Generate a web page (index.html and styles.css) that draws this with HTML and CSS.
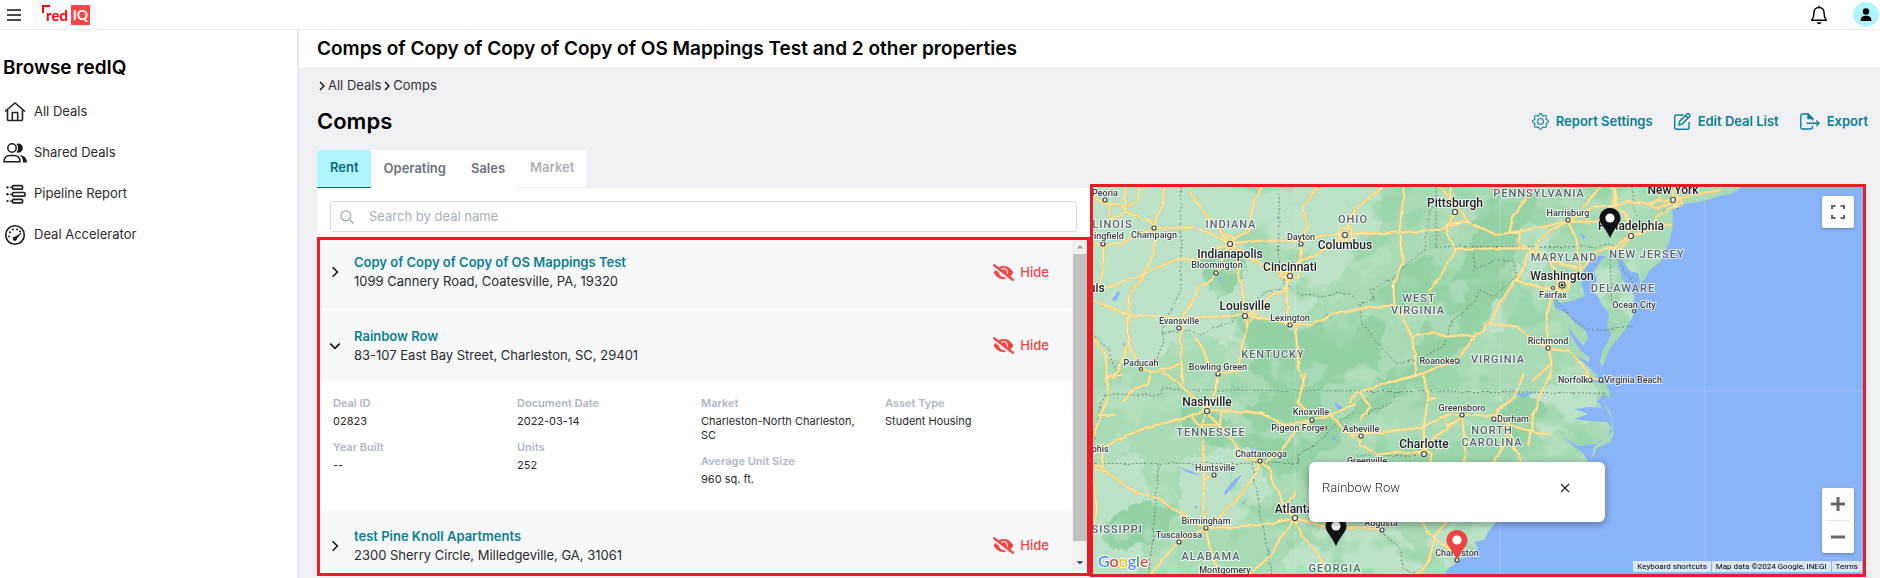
FILE: index.html
```html
<!DOCTYPE html>
<html lang="en">
<head>
<meta charset="utf-8">
<meta name="viewport" content="width=device-width, initial-scale=1">
<title>redIQ - Comps</title>
<link rel="stylesheet" href="styles.css">
</head>
<body>
<svg class="defs" width="0" height="0" aria-hidden="true">
  <symbol id="eye-off" viewBox="0 0 640 512"><path fill="currentColor" stroke="currentColor" stroke-width="14" d="M320 400c-75.85 0-137.25-58.71-142.9-133.11L72.2 185.82c-13.79 17.3-26.48 35.59-36.72 55.59a32.35 32.35 0 0 0 0 29.19C89.71 376.41 197.07 448 320 448c26.91 0 52.87-4 77.89-10.46L346 397.39a144.13 144.13 0 0 1-26 2.61zm313.82 58.1l-110.55-85.44a331.25 331.25 0 0 0 81.25-102.07 32.35 32.35 0 0 0 0-29.19C550.29 135.59 442.93 64 320 64a308.15 308.15 0 0 0-147.32 37.7L45.46 3.37A16 16 0 0 0 23 6.18L3.37 31.45A16 16 0 0 0 6.18 53.9l588.36 454.73a16 16 0 0 0 22.46-2.81l19.64-25.27a16 16 0 0 0-2.82-22.45zm-183.72-142l-39.3-30.38A94.75 94.75 0 0 0 416 256a94.76 94.76 0 0 0-121.31-92.21A47.65 47.65 0 0 1 304 192a46.64 46.64 0 0 1-1.54 10l-73.61-56.89A142.31 142.31 0 0 1 320 112a143.92 143.92 0 0 1 144 144c0 21.63-5.29 41.79-13.9 60.11z"/></symbol>
  <symbol id="chev" viewBox="0 0 10 10"><path d="M3 1l4 4-4 4" fill="none" stroke="currentColor" stroke-width="1.300"/></symbol>
  <symbol id="pin" viewBox="0 0 22 32"><path d="M11 1C5.2 1 .5 5.600.5 11.300c0 5.700 5.500 8.700 10.500 19.700 5-11 10.500-14 10.500-19.700C21.500 5.600 16.800 1 11 1z" fill="currentColor"/><circle cx="11" cy="11" r="4.600" fill="#fff"/></symbol>
</svg>

<header class="topbar">
  <button class="icon-btn" type="button" aria-label="Menu"><svg width="14" height="14" viewBox="0 0 14 14"><path d="M0 2h14M0 7h14M0 12h14" stroke="#111" stroke-width="1.300"/></svg></button>
  <a class="logo" href="#" aria-label="redIQ home">
    <svg class="logo-mark" width="8" height="8" viewBox="0 0 8 8"><path d="M1 8V1h7" fill="none" stroke="#f00" stroke-width="2"/></svg>
    <span class="logo-red">red</span><span class="logo-iq">IQ</span>
  </a>
  <div class="topbar-right">
    <button class="icon-btn" type="button" aria-label="Notifications"><svg width="18" height="20" viewBox="0 0 18 20"><path d="M9 2.500c-3.300 0-5 2.400-5 5 0 4-.8 6-2.300 7.800h14.600C14.800 13.500 14 11.500 14 7.500c0-2.600-1.700-5-5-5zM9 .7v2" fill="none" stroke="#000" stroke-width="1.500" stroke-linejoin="round"/><path d="M6.800 17.200h4.400a2.200 2 0 0 1-4.400 0z"/></svg></button>
    <button class="avatar" type="button" aria-label="Account"><svg width="12" height="14" viewBox="0 0 12 14"><circle cx="6" cy="3.500" r="3.200"/><path d="M.5 13c0-3.500 2-5.200 5.500-5.200s5.500 1.700 5.500 5.200z"/></svg></button>
  </div>
</header>

<div class="layout">
  <nav class="sidebar" aria-label="Browse">
    <h2>Browse redIQ</h2>
    <a href="#"><svg viewBox="0 0 24 24"><path d="M2 11.500L12 3l10 8.500M4.500 10v9.500a1 1 0 0 0 1 1h13a1 1 0 0 0 1-1V10M9.300 20v-7.500h5.400V20" fill="none" stroke="#222" stroke-width="1.600"/></svg>All Deals</a>
    <a href="#"><svg viewBox="0 0 24 24"><path d="M13.500 3a4.500 4.500 0 1 1 0 8.200 6 6 0 0 0 0-8.200zM16.500 14c4.500.5 7 2.500 7.500 7.500h-4c0-3.500-1-6-3.500-7.500z" fill="#1b1b1f"/><circle cx="9" cy="7" r="4.200" fill="#fff" stroke="#1b1b1f" stroke-width="1.500"/><path d="M1 20.800c0-4 2-6.300 6-6.300h4c4 0 6 2.300 6 6.300z" fill="none" stroke="#1b1b1f" stroke-width="1.500"/></svg>Shared Deals</a>
    <a href="#"><svg viewBox="0 0 24 24"><g fill="none" stroke="#222" stroke-width="1.700"><rect x="9.500" y="3.600" width="10" height="3.600" rx="1"/><rect x="9.500" y="10.500" width="12.500" height="3.600" rx="1"/><rect x="9.500" y="17.300" width="10" height="3.600" rx="1"/></g><g fill="#222"><circle cx="4.500" cy="5.400" r="1.200"/><circle cx="4.500" cy="12.300" r="1.200"/><circle cx="4.500" cy="19.100" r="1.200"/><path d="M7 4.800h3v1.200H7zM7 11.700h3v1.200H7zM7 18.500h3v1.200H7z"/></g></svg>Pipeline Report</a>
    <a href="#"><svg viewBox="0 0 24 24"><circle cx="12" cy="12" r="9.300" fill="none" stroke="#1b1b1f" stroke-width="1.600"/><path d="M10.500 15.200l7.500-5-5.500 6.800z" fill="#1b1b1f" stroke="#1b1b1f" stroke-width=".8"/><circle cx="11.800" cy="15.800" r="2.100" fill="#1b1b1f"/><g fill="#1b1b1f"><circle cx="6" cy="13.500" r="1"/><circle cx="7" cy="9.200" r="1"/><circle cx="10" cy="6.500" r="1"/><circle cx="14" cy="6.500" r="1"/><circle cx="17" cy="8.500" r="1"/></g></svg>Deal Accelerator</a>
  </nav>

  <main class="main">
    <h1 class="page-title">Comps of Copy of Copy of Copy of OS Mappings Test and 2 other properties</h1>
    <div class="content">
      <nav class="crumbs" aria-label="Breadcrumb"><svg width="10" height="12"><use href="#chev"/></svg><a href="#">All Deals</a><svg width="10" height="12"><use href="#chev"/></svg><a href="#">Comps</a></nav>
      <div class="heading">
        <h2>Comps</h2>
        <div class="actions">
          <button type="button"><svg width="17" height="17" viewBox="0 0 16 16" fill="currentColor"><path d="M8 4.754a3.246 3.246 0 1 0 0 6.492 3.246 3.246 0 0 0 0-6.492M5.754 8a2.246 2.246 0 1 1 4.492 0 2.246 2.246 0 0 1-4.492 0"/><path d="M9.796 1.343c-.527-1.790-3.065-1.790-3.592 0l-.094.319a.873.873 0 0 1-1.255.52l-.292-.16c-1.640-.892-3.433.902-2.540 2.541l.159.292a.873.873 0 0 1-.52 1.255l-.319.094c-1.790.527-1.790 3.065 0 3.592l.319.094a.873.873 0 0 1 .52 1.255l-.16.292c-.892 1.640.901 3.434 2.541 2.540l.292-.159a.873.873 0 0 1 1.255.52l.094.319c.527 1.790 3.065 1.790 3.592 0l.094-.319a.873.873 0 0 1 1.255-.52l.292.16c1.640.893 3.434-.902 2.540-2.541l-.159-.292a.873.873 0 0 1 .52-1.255l.319-.094c1.790-.527 1.790-3.065 0-3.592l-.319-.094a.873.873 0 0 1-.52-1.255l.16-.292c.893-1.640-.902-3.433-2.541-2.540l-.292.159a.873.873 0 0 1-1.255-.52zm-2.633.283c.246-.835 1.428-.835 1.674 0l.094.319a1.873 1.873 0 0 0 2.693 1.115l.291-.16c.764-.415 1.600.42 1.184 1.185l-.159.292a1.873 1.873 0 0 0 1.116 2.692l.318.094c.835.246.835 1.428 0 1.674l-.319.094a1.873 1.873 0 0 0-1.115 2.693l.16.291c.415.764-.42 1.600-1.185 1.184l-.291-.159a1.873 1.873 0 0 0-2.693 1.116l-.094.318c-.246.835-1.428.835-1.674 0l-.094-.319a1.873 1.873 0 0 0-2.692-1.115l-.292.16c-.764.415-1.600-.42-1.184-1.185l.159-.291A1.873 1.873 0 0 0 1.945 8.930l-.319-.094c-.835-.246-.835-1.428 0-1.674l.319-.094A1.873 1.873 0 0 0 3.060 4.377l-.16-.292c-.415-.764.42-1.600 1.185-1.184l.292.159a1.873 1.873 0 0 0 2.692-1.115z"/></svg>Report Settings</button>
          <button type="button"><svg width="17" height="17" viewBox="0 0 17 17" fill="none" stroke="currentColor" stroke-width="1.400"><path d="M9.500 2H2.700a2 2 0 0 0-2 2v10.300a2 2 0 0 0 2 2H13a2 2 0 0 0 2-2V9M5 12l.8-3.800 7-7a1.600 1.600 0 0 1 2.600 2.600l-7 7zM11.500 2.600l2.600 2.600"/></svg>Edit Deal List</button>
          <button type="button"><svg width="20" height="17" viewBox="0 0 20 17" fill="none" stroke="currentColor" stroke-width="1.400"><path d="M12.500 7.500V5.500L8 1H2.500a1.700 1.700 0 0 0-1.700 1.700v11.600A1.700 1.700 0 0 0 2.500 16h8.300a1.700 1.700 0 0 0 1.700-1.700v-1.500M6.500 10.200H19M16.300 7.500l2.700 2.700-2.700 2.700"/><path d="M8 1v4.500h4.500z" fill="currentColor"/></svg>Export</button>
        </div>
      </div>
      <div class="tabs" role="tablist">
        <button class="active" type="button" role="tab" aria-selected="true">Rent</button><button type="button" role="tab">Operating</button><button type="button" role="tab">Sales</button><button class="disabled" type="button" role="tab" disabled>Market</button>
      </div>
      <div class="split">
        <section class="panel">
          <label class="search">
            <svg width="14" height="14" viewBox="0 0 14 14"><circle cx="5.800" cy="5.800" r="4.900" fill="none" stroke="#9aa9b8" stroke-width="1.200"/><path d="M9.300 9.300l4.200 4.200" stroke="#9aa9b8" stroke-width="1.200"/></svg>
            <input type="text" placeholder="Search by deal name" aria-label="Search by deal name">
          </label>
          <div class="list">
            <div class="items">
              <article class="deal">
                <button class="toggle" type="button" aria-label="Expand"><svg width="12" height="12"><use href="#chev"/></svg></button>
                <div class="info"><a href="#">Copy of Copy of Copy of OS Mappings Test</a><p>1099 Cannery Road, Coatesville, PA, 19320</p></div>
                <button class="hide" type="button"><svg width="21" height="17"><use href="#eye-off"/></svg>Hide</button>
              </article>
              <article class="deal">
                <button class="toggle open" type="button" aria-label="Collapse"><svg width="12" height="12"><use href="#chev"/></svg></button>
                <div class="info"><a href="#">Rainbow Row</a><p>83-107 East Bay Street, Charleston, SC, 29401</p></div>
                <button class="hide" type="button"><svg width="21" height="17"><use href="#eye-off"/></svg>Hide</button>
              </article>
              <div class="details">
                <dl><dt>Deal ID</dt><dd>02823</dd><dt>Year Built</dt><dd>--</dd></dl>
                <dl><dt>Document Date</dt><dd>2022-03-14</dd><dt>Units</dt><dd>252</dd></dl>
                <dl><dt>Market</dt><dd>Charleston-North Charleston, SC</dd><dt>Average Unit Size</dt><dd>960 sq. ft.</dd></dl>
                <dl><dt>Asset Type</dt><dd>Student Housing</dd></dl>
              </div>
              <article class="deal">
                <button class="toggle" type="button" aria-label="Expand"><svg width="12" height="12"><use href="#chev"/></svg></button>
                <div class="info"><a href="#">test Pine Knoll Apartments</a><p>2300 Sherry Circle, Milledgeville, GA, 31061</p></div>
                <button class="hide" type="button"><svg width="21" height="17"><use href="#eye-off"/></svg>Hide</button>
              </article>
            </div>
            <div class="scroll" aria-hidden="true">
              <svg width="14" height="14" viewBox="0 0 14 14"><path d="M3.500 8.500L7 5l3.500 3.500z" fill="#a3a3a3"/></svg>
              <div class="thumb"></div>
              <svg width="14" height="14" viewBox="0 0 14 14"><path d="M3.500 5L7 8.500 10.500 5z" fill="#505050"/></svg>
            </div>
          </div>
        </section>

        <section class="map" aria-label="Map">
          <svg class="map-art" viewBox="1093 187 770 387" preserveAspectRatio="xMinYMin slice">
            <defs>
              <filter id="rough" x="0" y="0" width="100%" height="100%"><feTurbulence type="fractalNoise" baseFrequency=".06" numOctaves="3" seed="4"/><feDisplacementMap in="SourceGraphic" scale="18" xChannelSelector="R" yChannelSelector="G"/></filter>
              <filter id="wiggle" x="-5%" y="-5%" width="110%" height="110%" color-interpolation-filters="sRGB"><feTurbulence type="fractalNoise" baseFrequency=".09" numOctaves="2" seed="8"/><feDisplacementMap in="SourceGraphic" scale="4" xChannelSelector="R" yChannelSelector="G"/></filter>
              <filter id="patches" x="0" y="0" width="100%" height="100%" color-interpolation-filters="sRGB"><feTurbulence type="fractalNoise" baseFrequency=".028 .036" numOctaves="3" seed="11"/><feColorMatrix values="0 0 0 0 .733 0 0 0 0 .886 0 0 0 0 .776 9 0 0 0 -4.900"/></filter>
              <filter id="forest" x="0" y="0" width="100%" height="100%" color-interpolation-filters="sRGB"><feTurbulence type="fractalNoise" baseFrequency=".022 .03" numOctaves="3" seed="23"/><feColorMatrix values="0 0 0 0 .58 0 0 0 0 .824 0 0 0 0 .647 9 0 0 0 -4.900"/></filter>
              <g id="roads" fill="none" stroke-linejoin="round" stroke-linecap="round">
                <path transform="translate(1085 180) scale(.3333)" d="M20 50L60 70 110 75 125 95 200 125 208 145M120 15L122 95 75 120M72 75L75 130M165 15L160 60 130 80M240 15L235 70 215 110 208 145 205 220 170 300 130 345 132 410 130 490 120 520 85 595M208 145L330 142 365 155 435 190M312 15L330 60 375 115 435 190M534 15L505 70 500 110 495 150 435 185M435 190L520 183 580 182 650 183 720 165 780 162M20 195L110 192 140 170 208 145M55 195L55 270 40 320M65 325L170 285 270 240 340 238 400 205 435 190M435 190L400 270 380 300 340 320 330 350 300 400 292 440 285 470 292 600M435 190L458 240 460 290 475 340 480 405 488 450 470 500 465 570 400 582M435 190L500 240 540 258 615 285M615 285L645 240 650 190 665 130 655 80 700 20M615 285L640 245 710 215 780 165M615 285L600 330 545 355 540 380 480 405M605 290L608 420 630 440 635 480 640 560 655 600M480 405L560 420 615 430 680 435 750 400 810 392M20 360L70 380 130 405 240 408 290 415 420 408 480 405M335 475L355 510 370 550 400 582M130 490L170 568 200 580 290 550M20 470L60 520 70 595M230 570L265 600M780 163L810 90M765 145h35v35h-35zM425 170h20v30h-15M580 285l60 10 5-50M490 398l25 5-20 20"/>
                <path transform="translate(1350 180) scale(.3333)" d="M100 15L50 60 0 105M165 15L155 90 148 160 158 245 130 310 133 375 160 410 185 470 195 520 195 590M-15 162L145 158 280 148 300 130 350 125 440 165 530 150 650 125 740 125 790 122M265 15L300 50 330 95 355 125 290 140 300 180 318 210 270 290 240 330 240 370M318 210L430 205 540 205M545 15L530 50 490 110 478 155 510 160 505 190 540 210 520 265 500 300 460 350 420 430 375 470 320 540 190 590 150 600M190 470L250 458 290 470 350 465 375 470M0 390L133 375M420 430L500 440 550 480 595 505 590 400 610 350 638 315 695 265 740 215 800 200M655 125L600 150 565 190 560 210 600 240 638 315M655 125L680 180 685 240 695 265M655 125L720 85 810 75M700 80L755 15M498 300L540 315 600 330 638 315M595 505L660 515 700 560 720 600M595 505L605 550 550 600M605 550L600 600M540 210L620 250 690 265M790 15L800 75M315 95l-20 40M300 15l5 60M620 300h35v30h-35z"/>
                <path transform="translate(1610 180) scale(.3333)" d="M0 80L55 65 120 70 185 60 250 45 330 30M140 20L150 60 120 70M185 60L200 75 140 110 125 150 60 165 0 210M5 15L15 80 45 100 60 165 30 210M125 130L180 135M120 70L140 85 205 60M205 45l10 25-30 15M190 25v60"/>
                <path transform="translate(1085 375) scale(.3333)" d="M110 0L65 5 70 60 45 130 25 180M40 120L90 120M195 5L190 25 150 40 120 70 115 80M250 0L320 60 365 105M400 0L395 40 365 105M288 0L292 25M365 105L300 130 190 155 130 180 60 215 20 240M365 105L480 110 530 115 600 150 680 135 740 120 810 85M365 105L400 150 450 205 480 250 530 258M315 125L340 150 405 150 410 110M365 105L355 150 357 270 355 350 362 460M355 315L388 300M680 135L630 170 590 225 545 260M530 258L555 290 575 345 600 400 630 430M525 260L500 320 440 390 362 460M20 280L60 290 150 350 220 370 280 410 362 460M25 270L55 275 50 210M22 285L35 400 30 470M362 460L530 450 630 430M362 460L280 500 195 600M362 460L375 520 405 600M600 400L630 350M630 430L580 500 560 540 490 600M630 430L650 480 700 540 720 600M630 430L700 450 810 460M660 0L640 80 670 120M740 120L780 170 810 190"/>
                <path transform="translate(1350 375) scale(.3333)" d="M0 80L20 55 90 30 200 0M220 0L235 60 222 150 222 235M235 70L255 70M0 180L120 170 220 155 290 120 335 120 430 120 480 150 530 165 600 180M30 185L30 210 80 240 150 230 222 235 250 190 330 130M335 120L345 200 345 260M290 120L290 150 310 145M520 0L490 70 450 100 430 130M600 0L570 60 550 120 535 210M30 55L60 95 35 130M470 150L470 200 430 260M480 170L490 210 515 260M700 0L720 10 760 15M0 455L45 458 95 465M215 440L240 480 310 530M290 440L255 480 240 550 205 600M200 240l20-15 25 10-5 30"/>
              </g>
            </defs>
            <rect x="1090" y="180" width="900" height="420" fill="#a8dab5"/>
            <g filter="url(#rough)">
              <path fill="#bbe2c6" d="M1080 175h300l-12 60-30 40-40 50-60 20-50-12-40 32-68-10zM1085 470l50-20 20 60-20 70-60 10zM1180 460l70-20 20 50-40 40-50-10zM1575 270l60-10 10 60-25 30-18-20zM1430 540l60-50 30-10-10 50-60 50zM1280 560l60-40 60 10 30 50-100 20zM1530 390l60-10 5 40-50 20z"/>
              <path fill="#94d2a5" d="M1345 345l60-80 55-20 40-60 40 5-30 70-50 60-50 70-80 60-50 30-30-20 30-60zM1100 520l50-20 30 10-20 30-50 10zM1175 400l60 20 40-30 40 10-30 40-60 10-40-20zM1240 310l60 20 30-20 20 60-60 30-40-30zM1200 260l30-10 20 20-30 30zM1440 310l60-40 10 20-50 60-40 30zM1500 410l30-20 15 30-30 30z"/>
              <path fill="#a8dab5" d="M1380 340l30-40 20 10-20 50-30 20zM1440 230l30-20 10 20-30 50-20 5zM1320 390l40-20 20 5-30 40-30 5z"/>
              <path fill="#bbe2c6" d="M1484 325l40-70 25-40 15-5-20 50-25 40-22 35zM1360 205l20-10 5 25-15 15z"/>
            </g>
            <rect x="1093" y="187" width="770" height="390" filter="url(#patches)" opacity=".55"/>
            <rect x="1230" y="187" width="400" height="390" filter="url(#forest)" opacity=".6"/>
            <g fill="#8ab4f8">
              <path d="M1745 180L1738 190 1730 194 1720 196 1700 202 1684 204 1680 207 1672 208 1673 216 1672 230 1669 243 1660 262 1650 270 1645 279 1640 283 1638 273 1630 271 1624 263 1619 255 1618 264 1622 278 1628 290 1635 296 1633 303 1635 312 1627 327 1617 340 1610 348 1606 358 1602 367 1600 362 1602 352 1608 342 1611 334 1607 325 1609 314 1602 305 1599 298 1592 290 1597 280 1594 272 1600 262 1606 256 1597 256 1589 262 1583 272 1581 284 1585 296 1575 300 1560 303 1553 298 1555 308 1567 313 1575 323 1585 330 1588 338 1583 346 1576 337 1568 327 1570 334 1580 350 1590 358 1588 362 1575 355 1590 368 1598 376 1585 380 1598 383 1607 384 1611 400 1604 394 1597 401 1602 408 1590 407 1574 409 1588 414 1574 419 1590 421 1607 422 1611 428 1608 436 1596 444 1578 446 1562 436 1576 448 1583 453 1588 462 1560 478 1520 494 1500 516 1497 522 1490 529 1484 540 1474 542 1478 548 1467 556 1457 562 1448 569 1440 582 1990 590 1990 180z"/>
              <path d="M1112 300l6-9 2 2-4 8zM1123 342l3 3-1 9zM1224 492l12-14 6-3-8 11-9 9zM1176 466l12 4 15 6-14-3zM1218 278l4-2-2 6zM1195 505l3 4-4-2zM1242 503l6-5-4 6zM1267 548l4 5-2 2zM1510 388l12 6 12-2-10 6-10-4zM1334 402l10 6-6 2zM1332 435l5 4-4 1zM1250 448l8 2-6 2zM1580 232l6 5-3 3z"/>
            </g>
            <path d="M1603 400l8 14 3 20-4 8-13 6-6 12 3-14 12-8 6-6-1-14z" fill="#a8dab5"/>
            <path d="M1705 187v390M1093 391h770M1500 187v390M1295 187v390" stroke="#fff" stroke-opacity=".18" fill="none"/>
            <g fill="none" stroke="#66806f" stroke-width="2.700" stroke-dasharray="6 6" filter="url(#wiggle)">
              <path transform="translate(1085 180) scale(.3333)" d="M287 20L288 330 240 420 235 460 290 455 310 450 350 465 380 445 440 430 450 410 480 400 515 360 540 335 580 330 600 300 580 285 583 20M600 310L650 345 720 350 760 335 810 350M235 460L235 490 215 530 170 570M20 460L70 510 90 570 110 600"/>
              <path transform="translate(1350 180) scale(.3333)" d="M258 20L258 200 520 200 740 200 810 190M248 80L235 100 225 210 130 290 100 310 60 330 75 360 30 370 35 430 100 510 140 550 200 540 280 500 310 420 370 370 390 330 430 350 500 290 490 240 440 240 370 270 372 212M500 240L550 290 620 360 660 410 720 450 790 450M780 200L785 370"/>
              <path transform="translate(1610 180) scale(.3333)" d="M65 20L75 100 100 130M20 235L60 290 80 330M0 445L65 438M160 90L205 85"/>
              <path transform="translate(1085 375) scale(.3333)" d="M60 60L230 60 230 38 300 45 810 48M20 265L640 265M220 265L205 480 190 600M500 265L560 600M640 265L640 240 700 200 760 140 810 110M60 60L40 110 25 200"/>
              <path transform="translate(1350 375) scale(.3333)" d="M0 48L130 50 450 50 770 55M130 50L130 80 80 100 30 130M20 240L110 240 200 245M95 470L150 520 160 580 200 600"/>
            </g>
            <g filter="url(#wiggle)"><use href="#roads" stroke="#f5cf70" stroke-width="8"/><use href="#roads" stroke="#feeebb" stroke-width="3"/></g>
            <g fill="#fff" stroke="#444" stroke-width="1.200">
              <circle cx="1105" cy="200" r="2"/><circle cx="1103" cy="244" r="2"/><circle cx="1154" cy="228" r="2"/><circle cx="1230" cy="244" r="2.500"/><circle cx="1216" cy="273" r="2"/><circle cx="1301" cy="244" r="2"/><circle cx="1345" cy="235" r="2.500"/><circle cx="1290" cy="276" r="2.500"/><circle cx="1245" cy="316" r="2.500"/><circle cx="1290" cy="325" r="2"/><circle cx="1179" cy="328" r="2"/><circle cx="1141" cy="369" r="1.500"/><circle cx="1218" cy="374" r="2"/><circle cx="1455" cy="212" r="2.500"/><circle cx="1568" cy="220" r="2"/><circle cx="1673" cy="200" r="2.500"/><circle cx="1631" cy="236" r="2.500"/><circle cx="1553" cy="288" r="1.500"/><circle cx="1548" cy="348" r="2"/><circle cx="1457" cy="361" r="2"/><circle cx="1634" cy="311" r="1.500"/><circle cx="1590" cy="380" r="2"/><circle cx="1601" cy="380" r="2"/><circle cx="1207" cy="411" r="2.500"/><circle cx="1312" cy="420" r="2"/><circle cx="1325" cy="428" r="1.500"/><circle cx="1260" cy="461" r="2"/><circle cx="1214" cy="475" r="2"/><circle cx="1206" cy="528" r="2"/><circle cx="1179" cy="542" r="2"/><circle cx="1295" cy="518" r="2.500"/><circle cx="1361" cy="436" r="2"/><circle cx="1424" cy="454" r="2.500"/><circle cx="1462" cy="415" r="2"/><circle cx="1494" cy="419" r="2"/><circle cx="1382" cy="530" r="2"/><circle cx="1457" cy="560" r="2"/><circle cx="1562" cy="285" r="3"/>
            </g>
            <circle cx="1562" cy="285" r="1.500" fill="#222"/>
            <g class="lb state">
              <text x="1107" y="228">ILLINOIS</text><text x="1231" y="228">INDIANA</text><text x="1353" y="223">OHIO</text><text x="1539" y="197">PENNSYLVANIA</text><text x="1564" y="261">MARYLAND</text><text x="1647" y="258">NEW JERSEY</text><text x="1623" y="292">DELAWARE</text><text x="1419" y="302">WEST</text><text x="1418" y="314">VIRGINIA</text><text x="1498" y="363">VIRGINIA</text><text x="1273" y="358">KENTUCKY</text><text x="1211" y="436">TENNESSEE</text><text x="1492" y="434">NORTH</text><text x="1492" y="446">CAROLINA</text><text x="1106" y="533">MISSISSIPPI</text><text x="1211" y="560">ALABAMA</text><text x="1335" y="572">GEORGIA</text>
            </g>
            <g class="lb city">
              <text x="1230" y="258">Indianapolis</text><text x="1290" y="271">Cincinnati</text><text x="1345" y="249">Columbus</text><text x="1245" y="310">Louisville</text><text x="1455" y="207">Pittsburgh</text><text x="1673" y="194">New York</text><text x="1631" y="230">Philadelphia</text><text x="1562" y="280">Washington</text><text x="1207" y="406">Nashville</text><text x="1424" y="448">Charlotte</text><text x="1294" y="513">Atlanta</text><text x="1083" y="292">St Louis</text>
            </g>
            <g class="lb town">
              <text x="1105" y="196">Peoria</text><text x="1102" y="239">Springfield</text><text x="1154" y="238">Champaign</text><text x="1217" y="268">Bloomington</text><text x="1301" y="240">Dayton</text><text x="1290" y="321">Lexington</text><text x="1179" y="324">Evansville</text><text x="1141" y="366">Paducah</text><text x="1218" y="370">Bowling Green</text><text x="1568" y="216">Harrisburg</text><text x="1553" y="298">Fairfax</text><text x="1548" y="344">Richmond</text><text x="1437" y="364">Roanoke</text><text x="1634" y="308">Ocean City</text><text x="1573" y="383">Norfolk</text><text x="1633" y="383">Virginia Beach</text><text x="1311" y="415">Knoxville</text><text x="1298" y="431">Pigeon Forge</text><text x="1361" y="432">Asheville</text><text x="1261" y="457">Chattanooga</text><text x="1215" y="471">Huntsville</text><text x="1206" y="524">Birmingham</text><text x="1179" y="538">Tuscaloosa</text><text x="1225" y="573">Montgomery</text><text x="1367" y="464">Greenville</text><text x="1462" y="411">Greensboro</text><text x="1513" y="422">Durham</text><text x="1381" y="526">Augusta</text><text x="1457" y="556">Charleston</text><text x="1090" y="452">Memphis</text>
            </g>
            <text class="google" x="1098" y="567"><tspan fill="#4285f4">G</tspan><tspan fill="#ea4335">o</tspan><tspan fill="#fbbc04">o</tspan><tspan fill="#4285f4">g</tspan><tspan fill="#34a853">l</tspan><tspan fill="#ea4335">e</tspan></text>
            <use href="#pin" x="1599" y="207" width="22" height="32" color="#111"/>
            <use href="#pin" x="1325" y="515" width="22" height="32" color="#111"/>
            <use href="#pin" x="1446" y="529" width="22" height="32" color="#ef4444"/>
          </svg>
          <button class="ctl full" type="button" aria-label="Toggle fullscreen"><svg width="16" height="16" viewBox="0 0 16 16"><path d="M2 5V2h3.500M10.500 2H14v3M14 11v3h-3.500M5.500 14H2v-3" fill="none" stroke="#666" stroke-width="2"/></svg></button>
          <div class="ctl zoom"><button type="button" aria-label="Zoom in"><svg width="16" height="16" viewBox="0 0 16 16"><path d="M1 8h14M8 1v14" stroke="#666" stroke-width="3"/></svg></button><button type="button" aria-label="Zoom out"><svg width="16" height="16" viewBox="0 0 16 16"><path d="M1 8h14" stroke="#666" stroke-width="3"/></svg></button></div>
          <div class="popup"><span>Rainbow Row</span><button type="button" aria-label="Close"><svg width="10" height="10" viewBox="0 0 10 10"><path d="M1 1l8 8M9 1L1 9" stroke="#222" stroke-width="1.200"/></svg></button></div>
          <div class="credits"><button type="button">Keyboard shortcuts</button><span>Map data ©2024 Google, INEGI</span><a href="#">Terms</a></div>
        </section>
      </div>
    </div>
  </main>
</div>
</body>
</html>
```
FILE: styles.css
```css
* { box-sizing: border-box; }
body {
  margin: 0;
  height: 100vh;
  display: flex;
  flex-direction: column;
  overflow: hidden;
  font: 13px/19px Inter, "Liberation Sans", sans-serif;
  color: #2a2a2e;
  background: #fff;
}
h1, h2, p, dl, dd { margin: 0; }
a { color: inherit; text-decoration: none; }
button { font: inherit; color: inherit; background: none; border: 0; padding: 0; }
svg { display: block; flex: none; }
.defs { position: absolute; }

.topbar {
  flex: none;
  height: 30px;
  display: flex;
  align-items: center;
  padding: 0 1px 0 7px;
  border-bottom: 1px solid #ebebed;
}
.logo { display: flex; align-items: center; margin-left: 21px; }
.logo-mark { align-self: flex-start; }
.logo-red { margin-left: -4px; font: 700 15px/20px Lato, sans-serif; color: #f00; }
.logo-iq {
  margin-left: 3px;
  width: 19px;
  text-align: center;
  font: 700 14px/20px Lato, sans-serif;
  color: #fff;
  background: #ff4545;
}
.topbar-right { margin-left: auto; display: flex; align-items: center; gap: 25px; }
.avatar {
  width: 26px;
  height: 25px;
  border-radius: 50%;
  background: #b0f4ff;
  display: grid;
  place-items: center;
}

.layout { flex: 1; min-height: 0; display: grid; grid-template-columns: 299px minmax(0, 1fr); }
.sidebar { border-right: 2px solid #e9e9ee; padding: 26px 3px; }
.sidebar h2 { font-size: 19px; line-height: 24px; font-weight: 600; color: #000; margin-bottom: 11px; }
.sidebar a { display: flex; align-items: center; gap: 7px; height: 41px; }
.sidebar svg { width: 24px; height: 24px; }

.main { display: flex; flex-direction: column; min-height: 0; background: #eff0f4; }
.page-title {
  flex: none;
  height: 37px;
  padding-left: 18px;
  background: #fff;
  color: #000;
  font-size: 19px;
  line-height: 38px;
  font-weight: 600;
}
.content { flex: 1; min-height: 0; display: flex; flex-direction: column; padding: 9px 14px 1px 18px; }
.crumbs { display: flex; align-items: center; gap: 1px; color: #333; }
.crumbs svg { color: #000; }
.heading { display: flex; align-items: center; justify-content: space-between; height: 53px; }
.heading h2 { font-size: 22px; font-weight: 600; color: #000; }
.actions { display: flex; gap: 21px; margin-right: -2px; font-weight: 600; color: #0c7f93; }
.actions button { display: flex; align-items: center; gap: 7px; }

.tabs { display: flex; height: 38px; margin-top: 2px; align-self: flex-start; background: #fff; }
.tabs button { padding: 0 12px 2px 13px; font-weight: 600; color: #6a7280; }
.tabs .active { background: #b0f4ff; color: #0b6a7e; border-bottom: 1px solid #0b7386; border-radius: 3px 3px 0 0; }
.tabs .disabled { color: #acb1b9; border-bottom: 1px solid #eceef1; }

.split { flex: 1; min-height: 0; display: grid; grid-template-columns: minmax(0, 773fr) minmax(0, 776fr); }
.panel { background: #fff; display: flex; flex-direction: column; min-height: 0; padding-top: 13px; margin-bottom: 1px; }
.search {
  flex: none;
  display: flex;
  align-items: center;
  gap: 15px;
  height: 31px;
  margin: 0 13px 5px;
  padding: 0 9px;
  border: 1px solid #d5dae0;
  border-radius: 3px;
}
.search input { flex: 1; border: 0; outline: 0; padding: 0; font: inherit; background: none; }
.search input::placeholder { color: #a5b0be; }
.list { flex: 1; min-height: 0; display: flex; border: 3px solid #ed1c24; padding-bottom: 3px; }
.items { flex: 1; min-width: 0; overflow: hidden; }
.deal {
  display: flex;
  align-items: center;
  height: 70px;
  padding: 0 23px 1px 8px;
  background: #f7f8fa;
  border-radius: 3px;
}
.deal:first-child { height: 68px; padding-bottom: 4px; margin-bottom: 3px; }
.toggle { padding: 0 1px; color: #111; }
.toggle.open { transform: rotate(90deg); }
.info { margin-left: 12px; }
.info a { font-weight: 600; color: #0c7f93; }
.hide { margin-left: auto; display: flex; align-items: center; gap: 6px; font-weight: 500; color: #ef4444; }
.details {
  display: grid;
  grid-template-columns: repeat(4, 1fr);
  padding: 15px 3px 25px 13px;
  font-size: 11px;
  line-height: 14px;
}
.details dl { padding-right: 20px; }
.details dt { font-weight: 600; color: #adb7c5; margin-bottom: 4px; }
.details dd { margin-bottom: 12px; }
.details dd:last-child { margin-bottom: 0; }
.scroll { width: 15px; display: flex; flex-direction: column; background: #f1f1f1; padding-left: 1px; }
.thumb { flex: 1; margin-bottom: 15px; background: #c1c1c1; }

.map { position: relative; margin-top: -4px; border: 3px solid #ed1c24; background: #8ab4f8; overflow: hidden; }
.map-art { width: 100%; height: 100%; }
.lb text { text-anchor: middle; paint-order: stroke; stroke: #fff; stroke-opacity: .75; stroke-linejoin: round; font-family: Roboto, sans-serif; }
.state text { font-size: 11px; font-weight: 500; letter-spacing: 1px; fill: #5b6670; stroke-width: 2px; }
.city text { font-size: 12px; font-weight: 500; fill: #202124; stroke-width: 2px; }
.town text { font-size: 9px; font-weight: 500; fill: #3c4043; stroke-width: 2px; }
.google { font: 500 16px Lato, sans-serif; paint-order: stroke; stroke: #fff; stroke-width: 2px; }
.ctl { position: absolute; right: 9px; width: 32px; background: #fff; border-radius: 2px; box-shadow: 0 1px 3px rgb(0 0 0 / 30%); }
.full { top: 9px; height: 32px; display: grid; place-items: center; }
.zoom { bottom: 21px; padding: 0 4px; }
.zoom button { width: 100%; height: 32px; display: grid; place-items: center; }
.zoom button + button { border-top: 1px solid #e6e6e6; height: 33px; }
.popup {
  position: absolute;
  left: 216px;
  top: 275px;
  width: 296px;
  height: 60px;
  padding: 0 35px 8px 13px;
  display: flex;
  align-items: center;
  justify-content: space-between;
  font: 300 13px/18px Roboto, sans-serif;
  background: #fff;
  border-radius: 6px;
  box-shadow: 0 2px 7px 1px rgb(0 0 0 / 30%);
}
.credits {
  position: absolute;
  right: 1px;
  bottom: 2px;
  display: flex;
  gap: 1px;
  font: 8px/11px Roboto, sans-serif;
  color: #000;
}
.credits > * { padding: 0 4px; background: rgb(245 245 245 / 75%); }
```
